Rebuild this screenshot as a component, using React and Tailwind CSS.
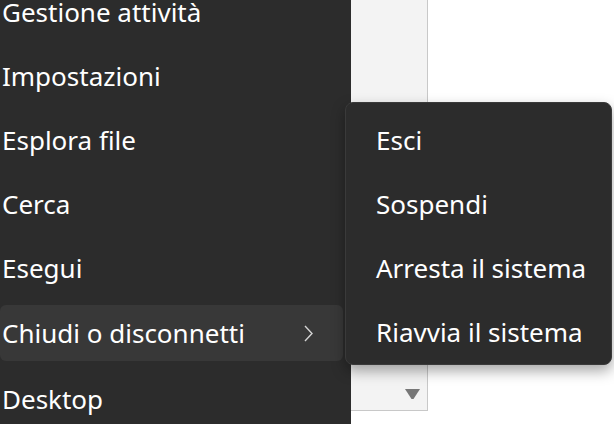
const items = ["Gestione attività", "Impostazioni", "Esplora file", "Cerca", "Esegui"];
const power = ["Esci", "Sospendi", "Arresta il sistema", "Riavvia il sistema"];

export default function App() {
  return (
    <div
      className="relative flex h-[424px] w-[614px] overflow-hidden bg-white text-white"
      style={{ fontFamily: '"Segoe UI", "Noto Sans", "Open Sans", sans-serif' }}
    >
      {/* start menu context list */}
      <div className="flex w-[351px] shrink-0 flex-col bg-[#2c2c2c] text-[26px]">
        <div className="-mt-[20px] flex flex-col">
          {items.map((t) => (
            <div key={t} className="flex h-[64px] items-center pl-[2px]">
              {t}
            </div>
          ))}
        </div>
        <div className="h-[2px] bg-[#3b3b3b]" />
        <div className="mt-[5px] mr-[8px] flex h-[56px] shrink-0 items-center justify-between rounded-md bg-[#383838] pl-[2px] pr-[30px]">
          <span>Chiudi o disconnetti</span>
          <svg width="9" height="17" viewBox="0 0 9 17" fill="none">
            <path d="M1 1 L8 8.5 L1 16" stroke="#d4d4d4" strokeWidth="1.4" />
          </svg>
        </div>
        <div className="mt-[6px] flex h-[64px] shrink-0 items-center pl-[2px]">Desktop</div>
      </div>

      {/* scrollbar column behind */}
      <div className="flex h-[411px] w-[77px] shrink-0 flex-col justify-end border-r border-b border-[#c8c8c8] bg-[#f3f3f3]">
        <div className="mb-[10px] flex justify-end pr-[6px]">
          <svg width="17" height="12" viewBox="0 0 17 12">
            <path d="M1 1 H16 L9.5 11 H7.5 Z" fill="#777" />
          </svg>
        </div>
      </div>
      <div className="flex-1" />

      {/* submenu */}
      <div className="absolute left-[345px] top-[102px] h-[263px] w-[267px] rounded-lg border border-[#3a3a3a] bg-[#2c2c2c] pt-[5px] text-[26px] shadow-[0_6px_14px_rgba(0,0,0,0.35)]">
        {power.map((t) => (
          <div key={t} className="flex h-[64px] items-center pl-[30px]">
            {t}
          </div>
        ))}
      </div>
    </div>
  );
}
